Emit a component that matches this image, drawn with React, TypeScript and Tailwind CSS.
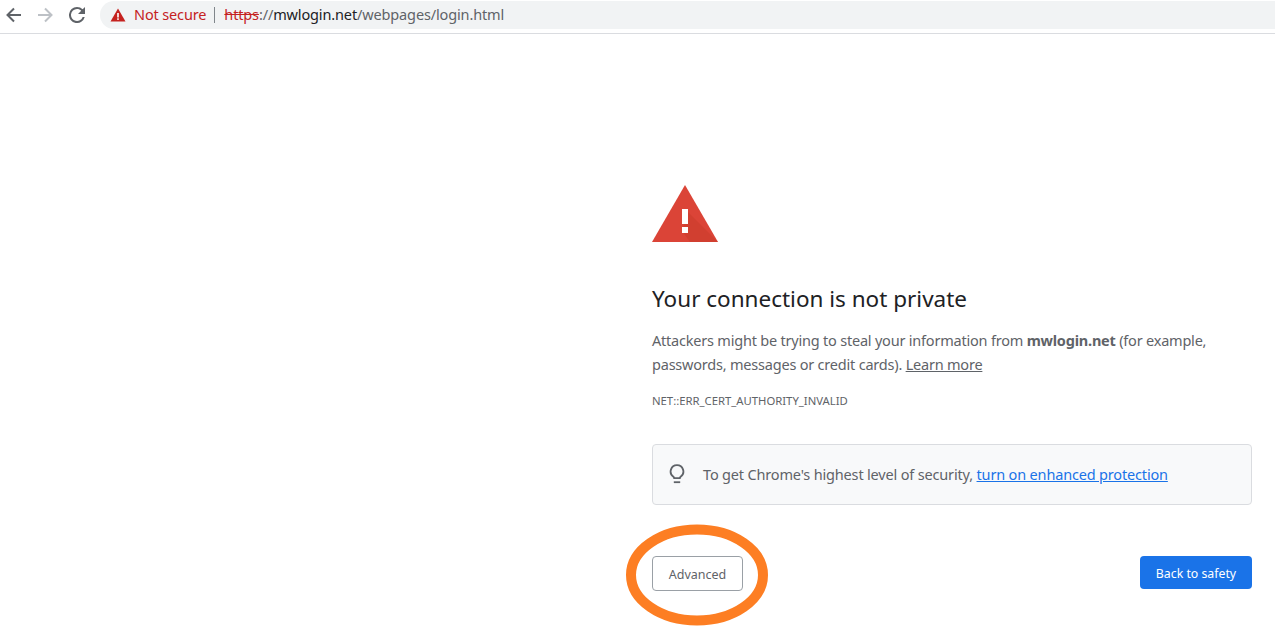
const font = "font-['Noto_Sans','Open_Sans',sans-serif]";

const BackIcon = ({ color }: { color: string }) => (
  <svg width="16" height="16" viewBox="0 0 16 16" fill="none" stroke={color} strokeWidth="2">
    <path d="M15 8H2" />
    <path d="M8 1.5L1.5 8L8 14.5" />
  </svg>
);

const Toolbar = () => (
  <div className="flex h-[34px] items-center border-b border-[#dadce0] bg-white pb-[3px]">
    <div className="ml-[6px] flex items-center gap-[15px]">
      <BackIcon color="#5f6368" />
      <div className="rotate-180">
        <BackIcon color="#bdc1c6" />
      </div>
      <svg className="ml-[1px]" width="16" height="16" viewBox="4 4 16 16" fill="#5f6368">
        <path d="M17.65 6.35A7.96 7.96 0 0 0 12 4a8 8 0 1 0 7.73 10h-2.08A6 6 0 1 1 12 6c1.66 0 3.14.69 4.22 1.78L13 11h7V4l-2.35 2.35z" />
      </svg>
    </div>
    <div className="ml-[15px] flex h-[28px] w-[1175px] items-center rounded-l-full bg-[#f1f3f4] pl-[10px] text-[14.5px] tracking-[-0.14px]">
      <svg width="16" height="14" viewBox="0 0 16 14">
        <path d="M8 0.5L15.5 13.5H0.5Z" fill="#c5221f" />
        <rect x="7.2" y="5" width="1.6" height="4.5" fill="#fff" />
        <rect x="7.2" y="10.3" width="1.6" height="1.6" fill="#fff" />
      </svg>
      <span className="ml-[8px] text-[#c5221f]">Not secure</span>
      <span className="ml-[8px] h-[16px] w-px bg-[#80868b]" />
      <span className="ml-[9px] text-[#c5221f] line-through">https</span>
      <span className="text-[#5f6368]">://</span>
      <span className="text-[#202124]">mwlogin.net</span>
      <span className="text-[#5f6368]">/webpages/login.html</span>
    </div>
  </div>
);

const WarningIcon = () => (
  <svg width="66" height="58" viewBox="0 0 66 58">
    <path d="M33 0L66 57H0Z" fill="#db4437" />
    <path d="M36 27L66 57H38L30 46Z" fill="#c53929" opacity="0.45" />
    <rect x="30" y="24" width="6" height="15" fill="#fff" />
    <rect x="30" y="42" width="6" height="6" fill="#fff" />
  </svg>
);

const BulbIcon = () => (
  <svg width="16" height="20" viewBox="0 0 16 20" fill="none" stroke="#5f6368" strokeWidth="1.8">
    <path d="M8 1.2a6.3 6.3 0 0 0-3.6 11.5c.5.4.8.9.8 1.5h5.6c0-.6.3-1.1.8-1.5A6.3 6.3 0 0 0 8 1.2z" />
    <path d="M4.8 18.2h6.4" />
  </svg>
);

const Interstitial = () => (
  <div className="ml-[652px] w-[600px] pt-[151px] text-[14.5px] leading-[24px] tracking-[-0.21px] text-[#5f6368]">
    <WarningIcon />
    <h1 className="mt-[40px] text-[22.5px] leading-[32px] font-normal tracking-normal text-[#202124]">
      Your connection is not private
    </h1>
    <p className="mt-[13px]">
      Attackers might be trying to steal your information from{" "}
      <strong className="font-bold">mwlogin.net</strong> (for example, passwords, messages or credit cards).{" "}
      <span className="underline">Learn more</span>
    </p>
    <div className="mt-[17px] text-[11.3px] leading-[16px] tracking-normal">NET::ERR_CERT_AUTHORITY_INVALID</div>
    <div className="mt-[35px] flex h-[61px] items-center rounded-[4px] border border-[#dadce0] bg-[#f8f9fa] pb-[1px] pl-[16px] tracking-[-0.17px]">
      <BulbIcon />
      <span className="ml-[18px]">
        To get Chrome's highest level of security,{" "}
        <span className="text-[#1a73e8] underline">turn on enhanced protection</span>
      </span>
    </div>
    <div className="mt-[51px] flex items-start justify-between tracking-normal">
      <div className="relative">
        <button className="h-[35px] w-[91px] rounded-[4px] border border-[#9aa0a6] bg-white pt-[2px] text-[12.5px] text-[#5f6368]">
          Advanced
        </button>
        <svg className="absolute top-[-32px] left-[-26px]" width="142" height="102" viewBox="0 0 142 102" fill="none">
          <ellipse cx="71" cy="51" rx="66" ry="45.5" stroke="#fd7e23" strokeWidth="10" />
        </svg>
      </div>
      <button className="h-[33px] w-[112px] rounded-[4px] bg-[#1a73e8] pt-[2px] text-[12.3px] text-white">
        Back to safety
      </button>
    </div>
  </div>
);

export default function App() {
  return (
    <div className={`h-[643px] w-[1275px] overflow-hidden bg-white ${font}`}>
      <Toolbar />
      <Interstitial />
    </div>
  );
}
